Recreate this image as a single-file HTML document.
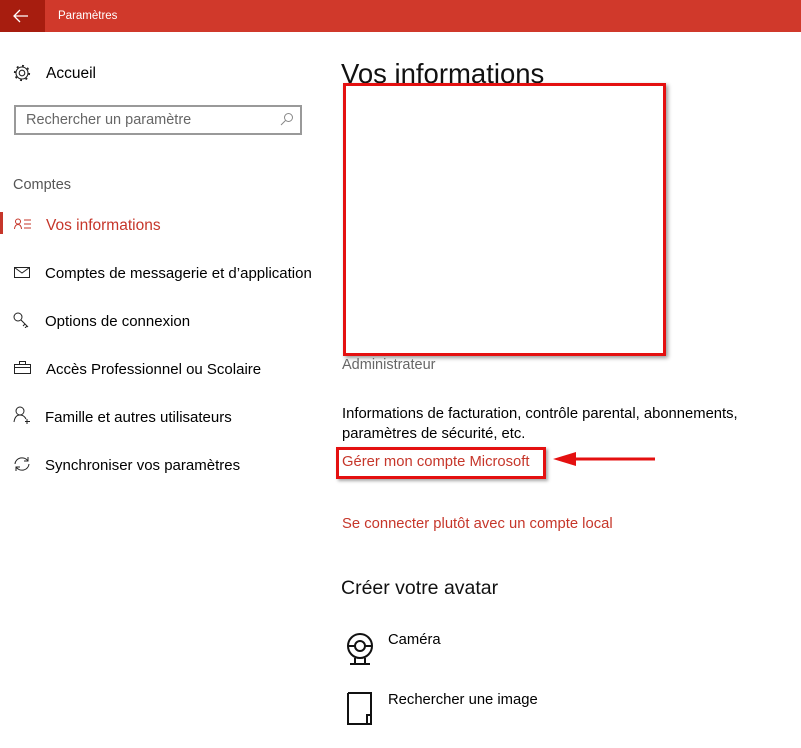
<!DOCTYPE html>
<html><head><meta charset="utf-8"><style>
*{margin:0;padding:0;box-sizing:border-box}
body{width:801px;height:748px;background:#fff;font-family:"Liberation Sans",sans-serif;color:#000;position:relative;overflow:hidden}
.a{position:absolute;white-space:nowrap}
.bar{position:absolute;left:0;top:0;width:801px;height:32px;background:#d0392b}
.back{position:absolute;left:0;top:0;width:45px;height:32px;background:#a71d0f}
.nav{font-size:15px;color:#000}
svg{position:absolute}
</style></head><body>
<div class="bar"></div><div class="back"></div>
<svg style="left:13px;top:9px" width="16" height="14" viewBox="0 0 16 14"><path d="M1 7H15M7 1L1 7L7 13" stroke="#fff" stroke-width="1.3" fill="none"/></svg>
<div class="a" style="left:58px;top:10px;font-size:11.5px;color:#fff">Paramètres</div>

<svg style="left:12px;top:63px" width="20" height="20" viewBox="0 0 20 20"><circle cx="10" cy="10" r="2.8" stroke="#222" fill="none" stroke-width="1.1"/><circle cx="10" cy="10" r="6" stroke="#222" fill="none" stroke-width="1.1"/><circle cx="10" cy="10" r="7.3" stroke="#222" fill="none" stroke-width="1.6" stroke-dasharray="2 3.7"/></svg>
<div class="a nav" style="left:46px;top:65px;font-size:15.5px">Accueil</div>
<div class="a" style="left:14px;top:105px;width:288px;height:30px;border:2px solid #999"></div>
<div class="a" style="left:26px;top:112px;font-size:14.5px;color:#666">Rechercher un paramètre</div>
<svg style="left:280px;top:112px" width="14" height="14" viewBox="0 0 14 14"><circle cx="8.5" cy="5.5" r="4" stroke="#888" fill="none"/><path d="M5.5 8.5L1 13" stroke="#888"/></svg>
<div class="a" style="left:13px;top:177px;font-size:14.5px;color:#555">Comptes</div>
<div class="a" style="left:0;top:212px;width:3px;height:22px;background:#c6362a"></div>
<svg style="left:14px;top:218px" width="18" height="12" viewBox="0 0 18 12"><circle cx="4" cy="3.5" r="2.5" stroke="#c6362a" fill="none"/><path d="M0.5 11Q1 6.5 4 6.5Q7 6.5 7.5 11M10 2H17M10 6H17M10 10H17" stroke="#c6362a" fill="none"/></svg>
<div class="a nav" style="left:46px;top:217px;color:#c6362a;font-size:15.5px">Vos informations</div>
<svg style="left:14px;top:267px" width="16" height="11" viewBox="0 0 16 11"><rect x=".5" y=".5" width="15" height="10" stroke="#222" fill="none"/><path d="M.5 .5L8 6L15.5 .5" stroke="#222" fill="none"/></svg>
<div class="a nav" style="left:45px;top:265px">Comptes de messagerie et d’application</div>
<svg style="left:13px;top:312px" width="18" height="16" viewBox="0 0 18 16"><circle cx="5" cy="5" r="4" stroke="#222" fill="none"/><path d="M8 8L15 15M12 12L10 14M14 14L12 16" stroke="#222" fill="none"/></svg>
<div class="a nav" style="left:45px;top:313px">Options de connexion</div>
<svg style="left:14px;top:361px" width="17" height="13" viewBox="0 0 17 13"><rect x=".5" y="3.5" width="16" height="9" stroke="#222" fill="none"/><path d="M5.5 3.5V.5H11.5V3.5M.5 6.5H16.5" stroke="#222" fill="none"/></svg>
<div class="a nav" style="left:46px;top:361px">Accès Professionnel ou Scolaire</div>
<svg style="left:13px;top:406px" width="18" height="18" viewBox="0 0 18 18"><circle cx="7" cy="5" r="4" stroke="#222" fill="none"/><path d="M1 16Q2 9 7 9Q11 9 13 13M14 13V18M12 15.5H17" stroke="#222" fill="none"/></svg>
<div class="a nav" style="left:45px;top:409px">Famille et autres utilisateurs</div>
<svg style="left:13px;top:456px" width="18" height="16" viewBox="0 0 18 16"><path d="M2 8A7 6.5 0 0 1 15 5M16 8A7 6.5 0 0 1 3 11M15 1V5H11M3 15V11H7" stroke="#222" fill="none"/></svg>
<div class="a nav" style="left:45px;top:457px">Synchroniser vos paramètres</div>

<div class="a" style="left:341px;top:58px;font-size:27.5px;color:#111">Vos informations</div>
<div class="a" style="left:343px;top:83px;width:323px;height:273px;border:3px solid #e41010;background:#fff;box-shadow:2px 2px 4px rgba(0,0,0,.4)"></div>
<div class="a" style="left:342px;top:357px;font-size:14.5px;color:#666">Administrateur</div>
<div class="a" style="left:342px;top:404px;font-size:14.8px;line-height:20px">Informations de facturation, contrôle parental, abonnements,<br>paramètres de sécurité, etc.</div>
<div class="a" style="left:336px;top:447px;width:210px;height:32px;border:3px solid #e41010;box-shadow:2px 2px 3px rgba(0,0,0,.35)"></div>
<div class="a" style="left:342px;top:454px;font-size:14.8px;color:#c6362a">Gérer mon compte Microsoft</div>
<svg style="left:550px;top:450px" width="110" height="18" viewBox="0 0 110 18"><path d="M15 9H105" stroke="#e41010" stroke-width="3"/><path d="M3 9L26 2V16Z" fill="#e41010"/></svg>
<div class="a" style="left:342px;top:516px;font-size:14.8px;color:#c6362a">Se connecter plutôt avec un compte local</div>
<div class="a" style="left:341px;top:577px;font-size:19.5px;color:#111">Créer votre avatar</div>
<svg style="left:345px;top:632px" width="30" height="34" viewBox="0 0 30 34"><circle cx="15" cy="14" r="12" stroke="#111" stroke-width="2" fill="none"/><circle cx="15" cy="14" r="5" stroke="#111" stroke-width="2" fill="none"/><path d="M3 14H10M20 14H27M10 26V32M20 26V32M5 32H25" stroke="#111" stroke-width="2" fill="none"/></svg>
<div class="a" style="left:388px;top:632px;font-size:14.8px">Caméra</div>
<svg style="left:347px;top:692px" width="26" height="34" viewBox="0 0 26 34"><path d="M1 1H24V31M1 1V32H20M20 32V23H24V32H20" stroke="#111" stroke-width="2" fill="none"/></svg>
<div class="a" style="left:388px;top:692px;font-size:14.8px">Rechercher une image</div>
</body></html>
